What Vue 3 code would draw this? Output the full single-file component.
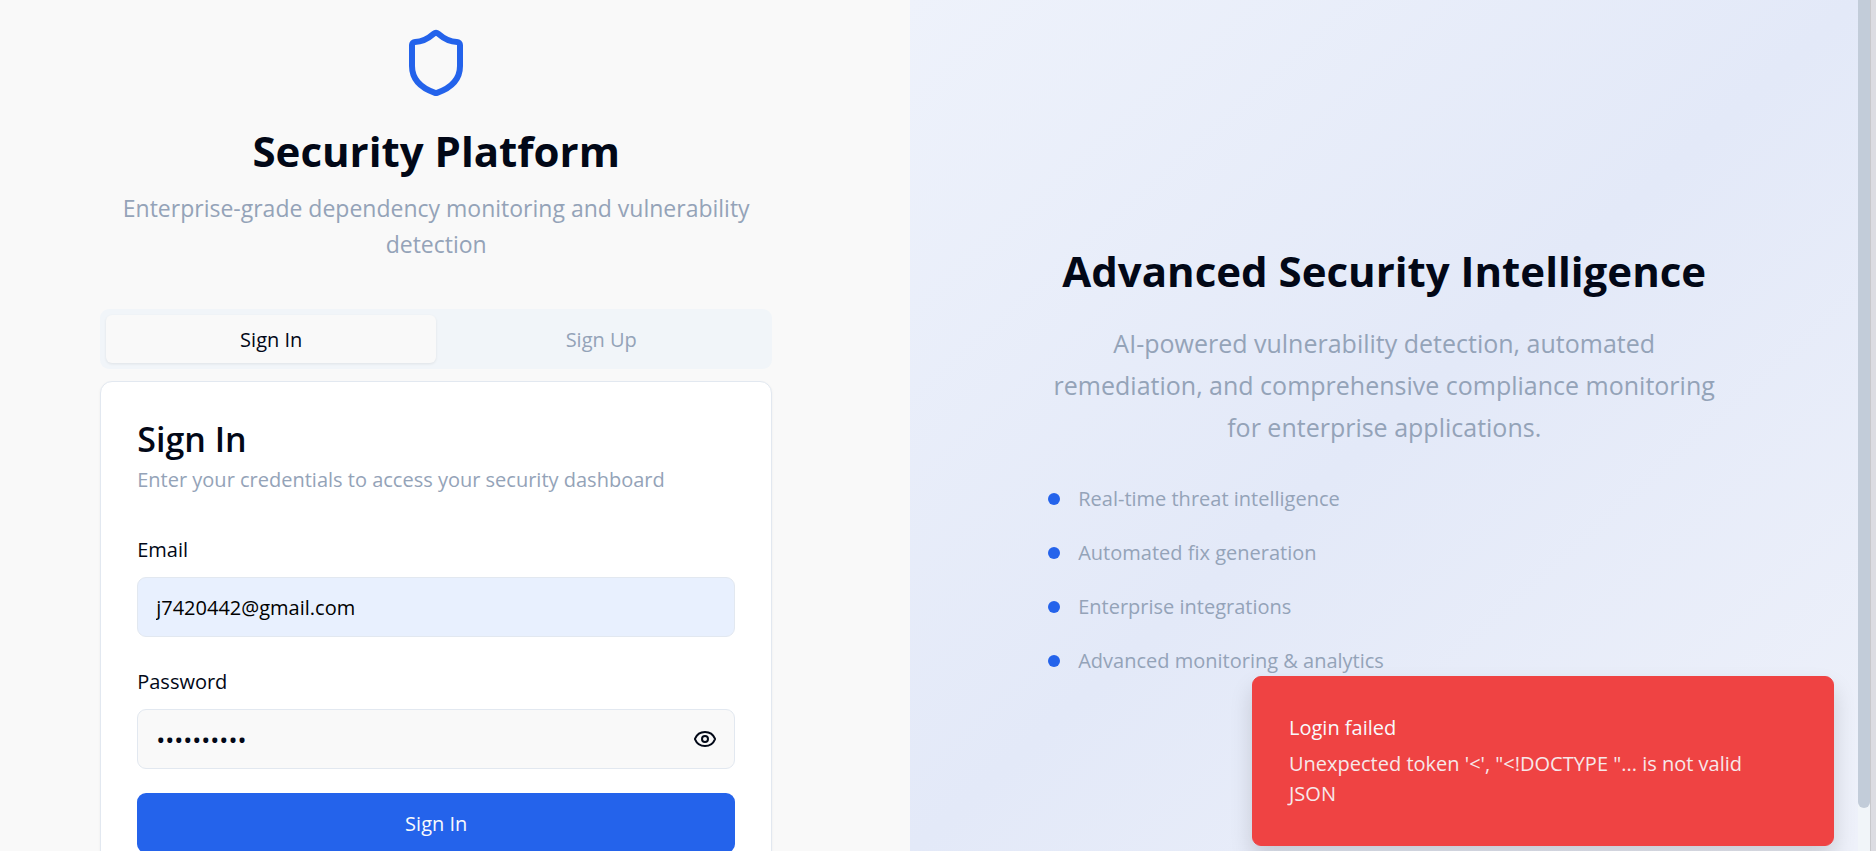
<script setup>
import { ref } from 'vue'

const email = ref('j7420442@gmail.com')
const password = ref('password10')
const showPassword = ref(false)
const tab = ref('in')
const features = [
  'Real-time threat intelligence',
  'Automated fix generation',
  'Enterprise integrations',
  'Advanced monitoring & analytics',
]
</script>

<template>
  <div class="window">
    <main class="page">
      <section class="auth">
        <div class="auth-inner">
          <header class="brand">
            <svg class="shield" viewBox="0 0 24 24" aria-hidden="true">
              <path d="M20 13c0 5-3.5 7.5-7.66 8.95a1 1 0 0 1-.67-.01C7.5 20.5 4 18 4 13V6a1 1 0 0 1 1-1c2 0 4.5-1.2 6.24-2.72a1.17 1.17 0 0 1 1.52 0C14.51 3.81 17 5 19 5a1 1 0 0 1 1 1z" />
            </svg>
            <h1>Security Platform</h1>
            <p>Enterprise-grade dependency monitoring and vulnerability detection</p>
          </header>

          <div class="tabs" role="tablist">
            <button type="button" role="tab" :aria-selected="tab === 'in'" :class="{ active: tab === 'in' }" @click="tab = 'in'">Sign In</button>
            <button type="button" role="tab" :aria-selected="tab === 'up'" :class="{ active: tab === 'up' }" @click="tab = 'up'">Sign Up</button>
          </div>

          <form class="card" @submit.prevent>
            <h2>Sign In</h2>
            <p class="hint">Enter your credentials to access your security dashboard</p>

            <label for="email">Email</label>
            <input id="email" v-model="email" class="field filled" type="email" />

            <label for="password">Password</label>
            <div class="password">
              <input id="password" v-model="password" class="field" :type="showPassword ? 'text' : 'password'" />
              <button type="button" class="eye" aria-label="Show password" @click="showPassword = !showPassword">
                <svg viewBox="0 0 24 24" aria-hidden="true">
                  <path d="M2.062 12.348a1 1 0 0 1 0-.696 10.75 10.75 0 0 1 19.876 0 1 1 0 0 1 0 .696 10.75 10.75 0 0 1-19.876 0" />
                  <circle cx="12" cy="12" r="3" />
                </svg>
              </button>
            </div>

            <button type="submit" class="submit">Sign In</button>
          </form>
        </div>
      </section>

      <section class="promo">
        <div class="promo-inner">
          <h2>Advanced Security Intelligence</h2>
          <p>AI-powered vulnerability detection, automated remediation, and comprehensive compliance monitoring for enterprise applications.</p>
          <ul>
            <li v-for="item in features" :key="item">{{ item }}</li>
          </ul>
        </div>
      </section>
    </main>

    <div class="scrollbar" aria-hidden="true"><div class="thumb"></div></div>
    <div class="edge" aria-hidden="true"></div>

    <div class="toast" role="alert">
      <strong>Login failed</strong>
      <p>Unexpected token '&lt;', "&lt;!DOCTYPE "... is not valid JSON</p>
    </div>
  </div>
</template>

<style>
body {
  margin: 0;
  background: #f9f9f9;
}
</style>

<style scoped>
* {
  box-sizing: border-box;
}
.window {
  display: flex;
  height: 100vh;
  overflow: hidden;
  background: #f9f9f9;
  color: #020817;
  font-family: "Segoe UI", "Open Sans", "Noto Sans", sans-serif;
  font-size: 20px;
  line-height: 30px;
}
h1,
h2,
p,
ul {
  margin: 0;
  padding: 0;
}
button,
input {
  font: inherit;
  color: inherit;
}
button {
  border: 0;
  background: none;
  cursor: pointer;
}
svg {
  display: block;
  fill: none;
  stroke: currentColor;
  stroke-width: 2;
  stroke-linecap: round;
  stroke-linejoin: round;
}
.page {
  flex: 1;
  display: flex;
  min-width: 0;
}
.auth {
  width: 49%;
  padding: 27px 38px 0 0;
}
.auth-inner {
  max-width: 672px;
  margin: 0 auto;
}
.brand {
  display: flex;
  flex-direction: column;
  align-items: center;
  text-align: center;
  color: #94a3b8;
  font-size: 23px;
  line-height: 36px;
}
.shield {
  width: 72px;
  height: 72px;
  color: #2463eb;
}
.brand h1 {
  margin: 25px 0 12px;
  color: #020817;
  font-size: 42px;
  line-height: 54px;
}
.tabs {
  display: flex;
  height: 60px;
  margin: 47px 0 12px;
  padding: 6px;
  border-radius: 9px;
  background: #f1f5f9;
}
.tabs button {
  flex: 1;
  padding: 2px 6px 0;
  border-radius: 6px;
  color: #94a3b8;
  font-weight: 500;
}
.tabs .active {
  background: #f9f9f9;
  color: #020817;
  box-shadow: 0 1px 3px rgba(0, 0, 0, 0.08);
}
.card {
  display: flex;
  flex-direction: column;
  padding: 36px;
  border: 1px solid #e2e8f0;
  border-radius: 12px;
  background: #fff;
  box-shadow: 0 1px 3px rgba(0, 0, 0, 0.05);
}
.card h2 {
  margin-bottom: 5px;
  font-size: 34px;
  font-weight: 600;
  line-height: 42px;
}
.hint {
  margin-bottom: 40px;
  color: #94a3b8;
}
.card label {
  margin-bottom: 12px;
  font-weight: 500;
}
.field {
  width: 100%;
  height: 60px;
  padding: 0 18px;
  border: 1px solid #e2e8f0;
  border-radius: 9px;
  background: #f9f9f9;
}
.filled {
  margin-bottom: 30px;
  background: #e8f0fe;
  color: #000;
}
.password {
  position: relative;
  margin-bottom: 24px;
}
.field[type="password"] {
  font-size: 24px;
}
.eye {
  position: absolute;
  inset: 0 0 0 auto;
  width: 60px;
  padding: 0 18px;
}
.eye svg {
  width: 24px;
  height: 24px;
}
.submit {
  height: 60px;
  padding: 2px 6px 0;
  border-radius: 9px;
  background: #2463eb;
  color: #f8fafc;
  font-weight: 500;
}
.promo {
  flex: 1;
  display: flex;
  align-items: center;
  justify-content: center;
  padding: 72px;
  background: linear-gradient(to bottom right, #eef2fb 0%, #e3e9f8 50%, #eef1fa 100%);
}
.promo-inner {
  max-width: 672px;
  padding-top: 68px;
  text-align: center;
}
.promo h2 {
  margin-bottom: 24px;
  font-size: 42px;
  line-height: 54px;
}
.promo p {
  color: #94a3b8;
  font-size: 25px;
  line-height: 42px;
}
.promo ul {
  display: grid;
  gap: 24px;
  margin-top: 36px;
  list-style: none;
  color: #94a3b8;
}
.promo li {
  display: flex;
  align-items: center;
  gap: 18px;
}
.promo li::before {
  content: "";
  width: 12px;
  height: 12px;
  border-radius: 50%;
  background: #2463eb;
}
.scrollbar {
  width: 12px;
  background: #f1f5f9;
}
.thumb {
  height: 95%;
  border-radius: 0 0 6px 6px;
  background: #c2ccd9;
}
.edge {
  width: 6px;
  border-left: 1px solid #c8c8cc;
  background: #dcdce2;
}
.toast {
  position: absolute;
  right: 42px;
  bottom: 5px;
  width: 582px;
  padding: 36px 60px 36px 36px;
  border: 1px solid #ef4343;
  border-radius: 9px;
  background: #ef4343;
  color: #f8fafc;
  box-shadow: 0 12px 22px rgba(0, 0, 0, 0.15);
}
.toast strong {
  display: block;
  margin-bottom: 6px;
  font-weight: 500;
}
.toast p {
  opacity: 0.9;
}
</style>
